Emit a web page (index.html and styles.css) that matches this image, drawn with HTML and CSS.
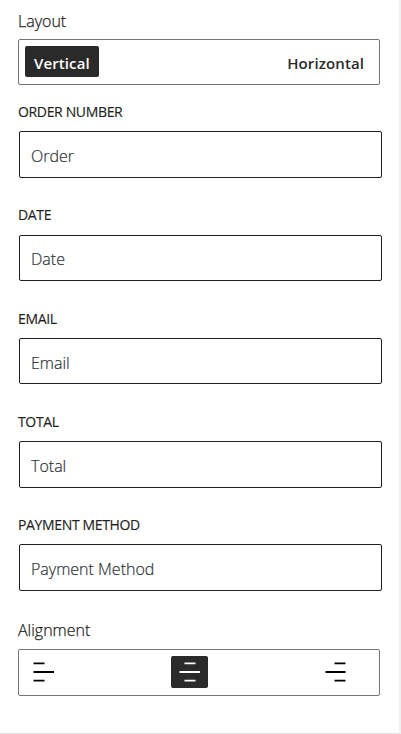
FILE: index.html
```html
<!DOCTYPE html>
<html lang="en">
  <head>
    <meta charset="UTF-8" />
    <meta name="viewport" content="width=device-width, initial-scale=1.0" />
    <title>Order details</title>
    <link rel="stylesheet" href="styles.css">
  </head>
  <body>
    <main class="panel">
      <div class="title">Layout</div>
      <div class="toggle">
        <button class="btn active">Vertical</button>
        <button class="btn">Horizontal</button>
      </div>

      <div class="fields">
        <div class="field">
          <label for="order">Order number</label>
          <input id="order" type="text" value="Order" />
        </div>
        <div class="field">
          <label for="date">Date</label>
          <input id="date" type="text" value="Date" />
        </div>
        <div class="field">
          <label for="email">Email</label>
          <input id="email" type="text" value="Email" />
        </div>
        <div class="field">
          <label for="total">Total</label>
          <input id="total" type="text" value="Total" />
        </div>
        <div class="field">
          <label for="payment">Payment method</label>
          <input id="payment" type="text" value="Payment Method" />
        </div>
      </div>

      <div class="title">Alignment</div>
      <div class="toggle align">
        <button class="icon-btn" aria-label="Left">
          <svg width="22" height="22" viewBox="0 0 22 22"><path d="M.5 2.4h11M.5 11h20.500M.5 19.600h11" /></svg>
        </button>
        <button class="icon-btn active" aria-label="Center">
          <svg width="22" height="22" viewBox="0 0 22 22"><path d="M5.500 2.400h11M.5 11h20.500M5.500 19.600h11" /></svg>
        </button>
        <button class="icon-btn" aria-label="Right">
          <svg width="22" height="22" viewBox="0 0 22 22"><path d="M9.500 2.400h11M.5 11h20M9.500 19.600h11" /></svg>
        </button>
      </div>
    </main>
  </body>
</html>
```
FILE: styles.css
```css
* {
  box-sizing: border-box;
}

body {
  margin: 0;
  background-color: #fff;
  color: #1e1e1e;
  font-family: 'Open Sans', 'Noto Sans', sans-serif;
}

.panel {
  height: 734px;
  padding: 10px 19px 0 18px;
  border-right: 2px solid #f0f0f0;
  border-bottom: 1px solid #e0e0e0;
}

.title {
  height: 29px;
  line-height: 22px;
  font-size: 16px;
  font-weight: 300;
  -webkit-text-stroke: 0.25px;
}

.toggle {
  display: flex;
  justify-content: space-between;
  align-items: flex-start;
  height: 46px;
  padding: 6px;
  border: 1px solid #757575;
  border-radius: 2px;
}

button {
  border: 0;
  border-radius: 2px;
  background: none;
  color: #2a2a2a;
  font-family: inherit;
}

.btn {
  height: 31px;
  padding: 3px 9px 0;
  font-size: 15px;
  font-weight: 600;
  letter-spacing: 0.1px;
}

.active {
  background-color: #2a2a2a;
  color: #fff;
}

.fields {
  padding-top: 17px;
}

.field {
  height: 103.25px;
}

label {
  display: block;
  height: 29.25px;
  line-height: 20px;
  font-size: 14px;
  letter-spacing: -0.35px;
  text-transform: uppercase;
  -webkit-text-stroke: 0.15px;
}

input {
  display: block;
  width: 363px;
  height: 46.5px;
  margin: 0 0 0 1px;
  padding: 3px 11px 0;
  border: 1px solid #1e1e1e;
  border-radius: 2px;
  background-color: #fff;
  color: #2c3338;
  font-family: inherit;
  font-size: 16px;
  font-weight: 300;
  -webkit-text-stroke: 0.2px;
}

.align {
  height: 47px;
  padding-right: 25px;
}

.fields + .title {
  margin-top: 1px;
  height: 30px;
}

.icon-btn {
  display: flex;
  justify-content: center;
  align-items: center;
  width: 37px;
  height: 32px;
  padding: 0;
}

.icon-btn:not(.active) {
  color: #000;
}

svg {
  fill: none;
  stroke: currentColor;
  stroke-width: 1.8;
}
```
